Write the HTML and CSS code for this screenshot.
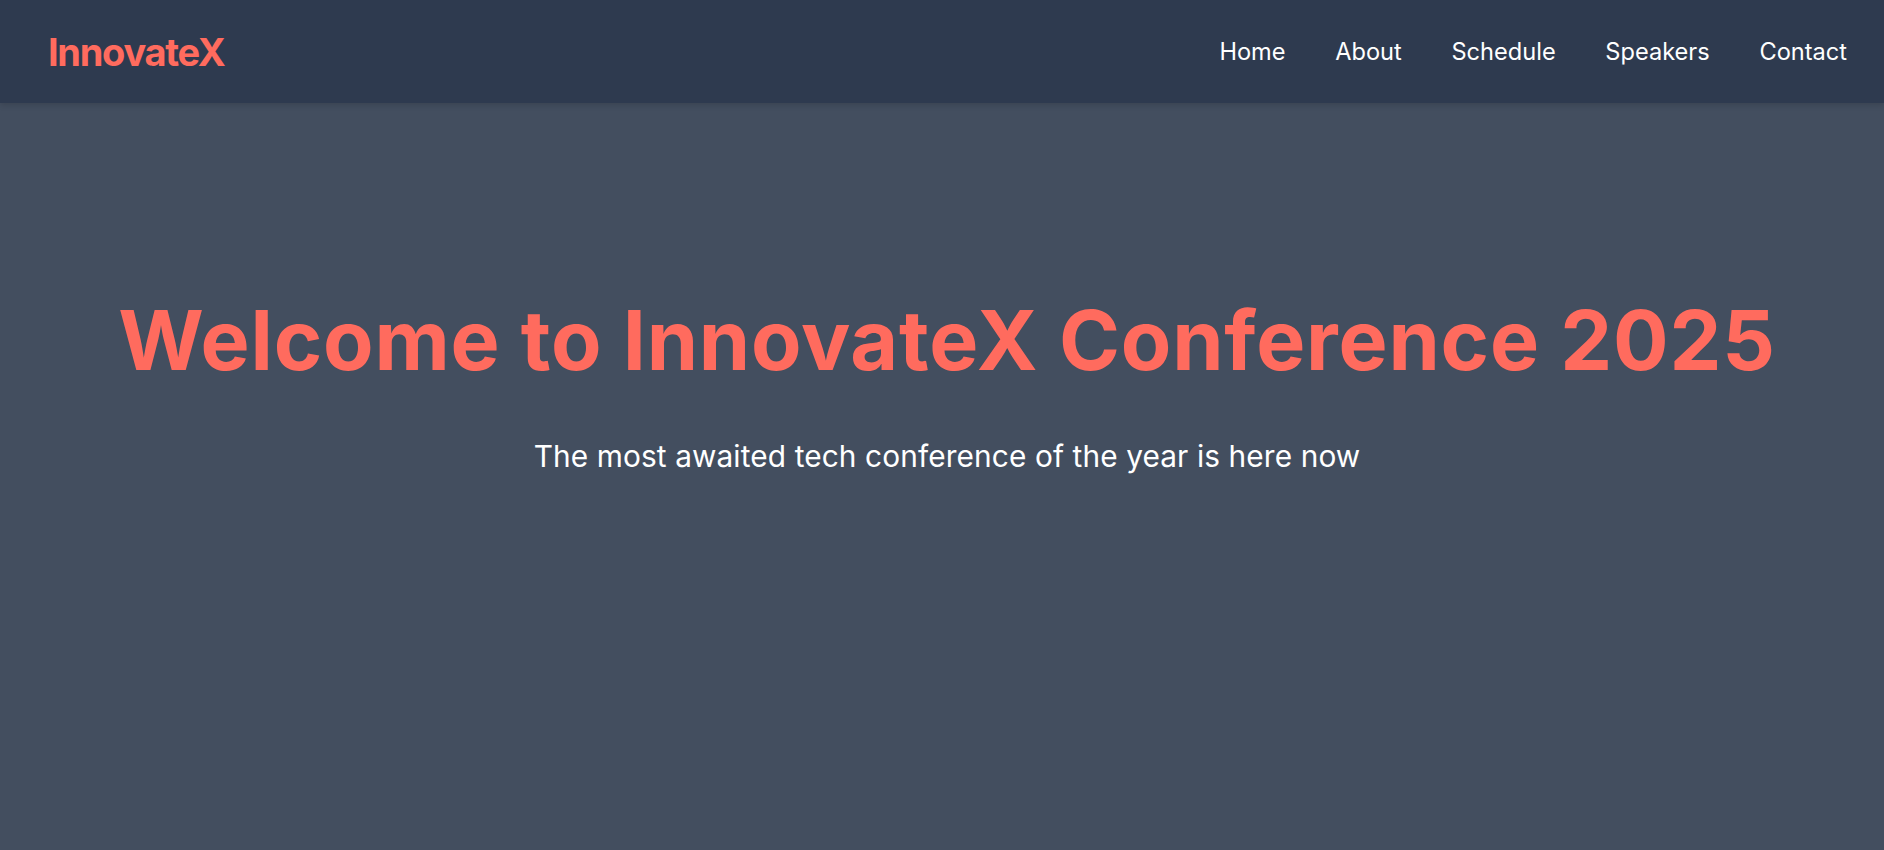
FILE: index.html
```html
<!DOCTYPE html>
<html lang="en">
<head>
<meta charset="utf-8">
<title>InnovateX Conference 2025</title>
<link rel="stylesheet" href="styles.css">
</head>
<body>
<header class="site-header">
  <div class="logo">InnovateX</div>
  <nav class="nav">
    <a href="#">Home</a>
    <a href="#">About</a>
    <a href="#">Schedule</a>
    <a href="#">Speakers</a>
    <a href="#">Contact</a>
  </nav>
</header>
<main class="hero">
  <h1 class="hero-title">Welcome to InnovateX Conference 2025</h1>
  <p class="hero-sub">The most awaited tech conference of the year is here now</p>
</main>
</body>
</html>
```
FILE: styles.css
```css
* { box-sizing: border-box; }
html, body { margin: 0; padding: 0; height: 100%; }
body {
  font-family: Inter, "Noto Sans", sans-serif;
  background: #434e5f;
  color: #ffffff;
}
.site-header {
  height: 103px;
  display: flex;
  align-items: center;
  justify-content: space-between;
  padding: 0 37px 0 48px;
  background: #2e3a4f;
  box-shadow: 0 2px 6px rgba(0,0,0,0.15);
  position: relative;
}
.logo {
  font-size: 38px;
  font-weight: 700;
  letter-spacing: -1.3px;
  color: #ff6b5e;
  line-height: 1;
}
.nav {
  display: flex;
  gap: 49.7px;
}
.nav a {
  color: #ffffff;
  text-decoration: none;
  font-size: 23.6px;
  font-weight: 400;
}
.hero {
  text-align: center;
  padding: 188px 15px 0 25px;
}
.hero-title {
  margin: 0;
  font-size: 82.5px;
  font-weight: 700;
  letter-spacing: 0.8px;
  line-height: 1.21;
  color: #ff6b5e;
}
.hero-sub {
  margin: 47px 0 0;
  font-size: 29.8px;
  font-weight: 400;
  letter-spacing: 0.12px;
  color: #ffffff;
}
```
